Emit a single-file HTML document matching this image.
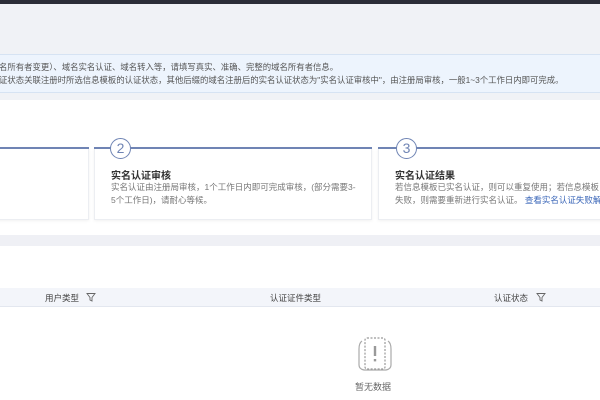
<!DOCTYPE html>
<html><head><meta charset="utf-8"><style>
*{margin:0;padding:0;box-sizing:border-box}
body{width:600px;height:400px;overflow:hidden;background:#fff;position:relative;font-family:"Liberation Sans","Noto Sans CJK SC",sans-serif;color:#333}
.a{position:absolute;white-space:nowrap}
</style></head><body>
<div class="a" style="left:0;top:0;width:600px;height:4px;background:#2b2d38"></div>
<div class="a" style="left:0;top:4px;width:600px;height:96px;background:#f0f2f6"></div>
<div class="a" style="left:0;top:54px;width:600px;height:39px;background:#edf4fd;border-top:1px solid #d6e3f3;border-bottom:1px solid #d6e3f3"></div>
<div class="a" style="left:-1px;top:61px;font-size:8.4px;color:#555;line-height:13px">名所有者变更）、域名实名认证、域名转入等，请填写真实、准确、完整的域名所有者信息。<br>证状态关联注册时所选信息模板的认证状态，其他后缀的域名注册后的实名认证状态为"实名认证审核中"，由注册局审核，一般1~3个工作日内即可完成。</div>
<div class="a" style="left:0;top:100px;width:600px;height:135px;background:#fff"></div>
<div class="a" style="left:-5px;top:148px;width:94px;height:72px;border:1px solid #eceef2;border-top:none;box-shadow:0 1px 3px rgba(0,0,0,.06)"></div>
<div class="a" style="left:94px;top:148px;width:278px;height:72px;border:1px solid #eceef2;border-top:none;box-shadow:0 1px 3px rgba(0,0,0,.06)"></div>
<div class="a" style="left:378px;top:148px;width:230px;height:72px;border:1px solid #eceef2;border-top:none;box-shadow:0 1px 3px rgba(0,0,0,.06)"></div>
<div class="a" style="left:0;top:147px;width:89px;height:2px;background:#6f84b4"></div>
<div class="a" style="left:94px;top:147px;width:278px;height:2px;background:#6f84b4"></div>
<div class="a" style="left:378px;top:147px;width:222px;height:2px;background:#6f84b4"></div>
<div class="a" style="left:110px;top:138px;width:21px;height:21px;border:1.5px solid #6f84b4;border-radius:50%;background:#fff;font-size:14px;line-height:18px;text-align:center;color:#6f84b4">2</div>
<div class="a" style="left:396px;top:138px;width:21px;height:21px;border:1.5px solid #6f84b4;border-radius:50%;background:#fff;font-size:14px;line-height:18px;text-align:center;color:#6f84b4">3</div>
<div class="a" style="left:111px;top:167px;font-size:10px;font-weight:bold;color:#333">实名认证审核</div>
<div class="a" style="left:111px;top:181px;font-size:8.5px;color:#777;line-height:13px">实名认证由注册局审核，1个工作日内即可完成审核，(部分需要3-<br>5个工作日)，请耐心等候。</div>
<div class="a" style="left:395px;top:167px;font-size:10px;font-weight:bold;color:#333">实名认证结果</div>
<div class="a" style="left:395px;top:181px;font-size:8.5px;color:#777;line-height:13px">若信息模板已实名认证，则可以重复使用；若信息模板<br>失败，则需要重新进行实名认证。 <span style="color:#3a66b8">查看实名认证失败解</span></div>
<div class="a" style="left:0;top:235px;width:600px;height:11px;background:#eff0f5"></div>
<div class="a" style="left:0;top:288px;width:600px;height:19px;background:#f3f5fa;border-bottom:1px solid #e3e7ef"></div>
<div class="a" style="left:45px;top:292px;font-size:8.5px;color:#444">用户类型</div>
<div class="a" style="left:270px;top:292px;font-size:8.5px;color:#444">认证证件类型</div>
<div class="a" style="left:494px;top:292px;font-size:8.5px;color:#444">认证状态</div>
<svg class="a" style="left:86px;top:292px" width="10" height="10" viewBox="0 0 10 10"><path d="M1 1.5H9L6 5.5V9L4 8V5.5Z" fill="none" stroke="#666" stroke-width="0.9"/></svg>
<svg class="a" style="left:536px;top:292px" width="10" height="10" viewBox="0 0 10 10"><path d="M1 1.5H9L6 5.5V9L4 8V5.5Z" fill="none" stroke="#666" stroke-width="0.9"/></svg>
<svg class="a" style="left:356px;top:335px" width="38" height="38" viewBox="0 0 38 38"><path d="M6 6Q3 8 3 14V30Q3 34 8 35H30Q35 34 35 30V14Q35 8 32 6" fill="none" stroke="#aaa" stroke-width="1.2"/><rect x="9" y="3" width="20" height="31" rx="2" fill="#fff" stroke="#999" stroke-width="1.2" stroke-dasharray="2 1.5"/><rect x="17.8" y="11" width="2.4" height="10" fill="#999"/><rect x="17.8" y="24" width="2.4" height="2.4" fill="#999"/></svg>
<div class="a" style="left:355px;top:380px;font-size:9px;color:#666">暂无数据</div>
</body></html>
